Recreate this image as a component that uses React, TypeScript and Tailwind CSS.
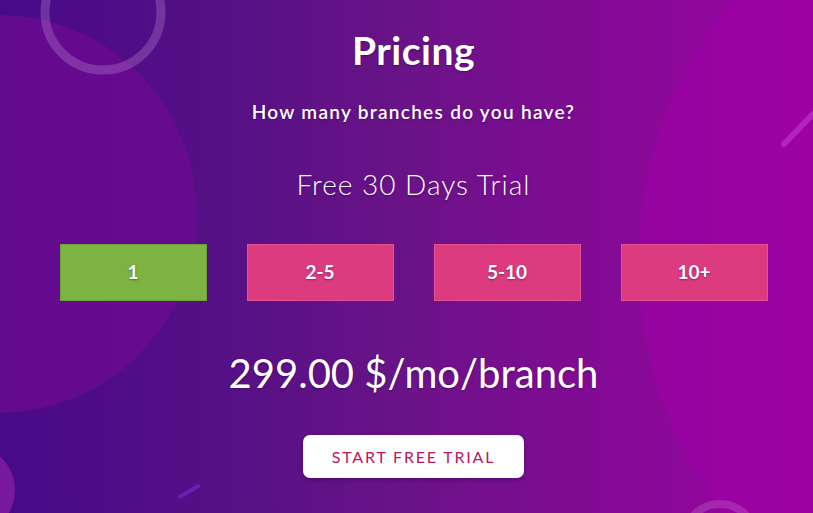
import React from "react";

const options = ["1", "2-5", "5-10", "10+"];

export default function App() {
  return (
    <div className="relative w-[813px] h-[513px] overflow-hidden bg-[linear-gradient(90deg,#470a88_0%,#561085_28%,#6a1388_50%,#840a95_75%,#9a04a0_100%)] font-['Lato','Noto_Sans',sans-serif] text-white">
      <svg className="absolute inset-0" width="813" height="513" viewBox="0 0 813 513">
        <circle cx="-2" cy="214" r="199" fill="#6a0a8f" opacity="0.85" />
        <circle cx="1051" cy="262" r="413" fill="#a000a6" opacity="0.55" />
        <circle cx="103" cy="12" r="58" fill="none" stroke="#c592d8" strokeOpacity="0.3" strokeWidth="9" />
        <circle cx="-30" cy="490" r="45" fill="#7d1aa2" opacity="0.9" />
        <circle cx="720" cy="540" r="36" fill="none" stroke="#c16ad0" strokeOpacity="0.35" strokeWidth="8" />
        <line x1="784" y1="144" x2="813" y2="114" stroke="#c23cd0" strokeOpacity="0.6" strokeWidth="6" strokeLinecap="round" />
        <line x1="180" y1="497" x2="198" y2="486" stroke="#7a2ad0" strokeOpacity="0.6" strokeWidth="4" strokeLinecap="round" />
      </svg>
      <div className="relative flex flex-col items-center pl-[14px] [text-shadow:0_1px_2px_rgba(40,0,60,0.45)]">
        <h1 className="mt-[26px] text-[39px] leading-[48px] font-bold tracking-[0.5px]">Pricing</h1>
        <p className="mt-[26px] text-[19px] leading-[24px] font-semibold tracking-[1.3px]">How many branches do you have?</p>
        <p className="mt-[44px] text-[28px] leading-[32px] font-light tracking-[1px]">Free 30 Days Trial</p>
        <div className="mt-[44px] flex gap-[40px]">
          {options.map((o, i) => (
            <div
              key={o}
              className={`w-[147px] h-[57px] flex items-center justify-center text-[19px] font-bold border ${
                i === 0 ? "bg-[#7cb342] border-[#6aa232]" : "bg-[#dd3b7f] border-[#e4528f]"
              }`}
            >
              {o}
            </div>
          ))}
        </div>
        <p className="mt-[48px] text-[40px] leading-[48px] font-normal">299.00 $/mo/branch</p>
        <button className="mt-[38px] w-[221px] h-[43px] rounded-[7px] bg-white text-[#b8175f] text-[16px] tracking-[1.8px] [text-shadow:none] shadow-[0_2px_4px_rgba(40,0,60,0.35)]">
          START FREE TRIAL
        </button>
      </div>
    </div>
  );
}
